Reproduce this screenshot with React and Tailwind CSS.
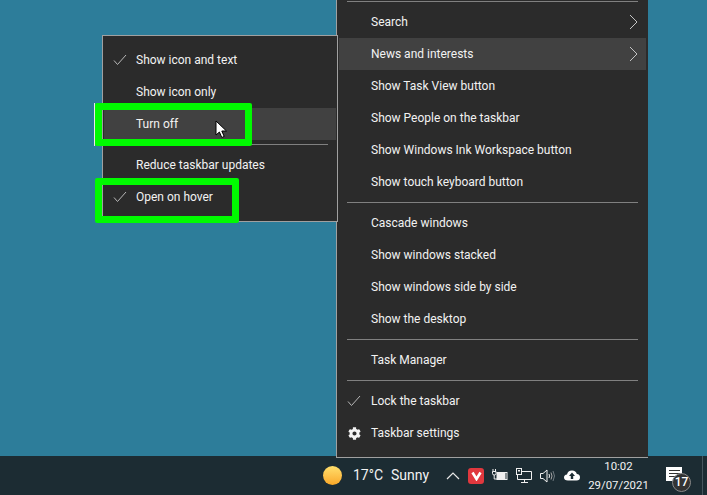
import { FaCog } from "react-icons/fa"

const font = "font-['Roboto','Noto_Sans',sans-serif]"

function Check() {
  return (
    <svg width="14" height="12" viewBox="0 0 14 12" fill="none" stroke="#b8b8b8" strokeWidth="1">
      <path d="M1 6.5 L4.5 10.5 L13 1" />
    </svg>
  )
}

function Row({ label, check, hover, arrow, gear, pad }) {
  return (
    <div className={`flex h-8 items-center text-[12px] text-[#f2f2f2] ${hover ? "bg-[#414141]" : ""}`}>
      <div className={`flex shrink-0 items-center justify-start ${pad}`}>
        {check && <Check />}
        {gear && <FaCog className="ml-[1px] text-[13px] text-[#f2f2f2]" />}
      </div>
      <span className="flex-1 whitespace-nowrap">{label}</span>
      {arrow && (
        <svg className="mr-[8px]" width="9" height="16" viewBox="0 0 9 16" fill="none" stroke="#c4c4c4" strokeWidth="1">
          <path d="M1 1 L8 8 L1 15" />
        </svg>
      )}
    </div>
  )
}

function Sep({ className }) {
  return <div className={`my-1 h-px bg-[#808080] ${className}`} />
}

function MainMenu() {
  const p = "w-[32px] pl-[8px]"
  return (
    <div className="absolute left-[336px] top-0 h-[458px] w-[312px] border-b border-l border-[#a0a0a0] bg-[#2b2b2b] px-[2px]">
      <div className="mx-[8px] mt-px h-px bg-[#808080]" />
      <div className="h-1" />
      <Row label="Search" arrow pad={p} />
      <Row label="News and interests" arrow hover pad={p} />
      <Row label="Show Task View button" pad={p} />
      <Row label="Show People on the taskbar" pad={p} />
      <Row label="Show Windows Ink Workspace button" pad={p} />
      <Row label="Show touch keyboard button" pad={p} />
      <Sep className="mx-[8px]" />
      <Row label="Cascade windows" pad={p} />
      <Row label="Show windows stacked" pad={p} />
      <Row label="Show windows side by side" pad={p} />
      <Row label="Show the desktop" pad={p} />
      <Sep className="mx-[8px]" />
      <Row label="Task Manager" pad={p} />
      <Sep className="mx-[8px]" />
      <Row label="Lock the taskbar" check pad={p} />
      <Row label="Taskbar settings" gear pad={p} />
    </div>
  )
}

function SubMenu() {
  const p = "w-[32px] pl-[9px]"
  return (
    <div className="absolute left-[102px] top-[35px] h-[187px] w-[236px] border border-[#a0a0a0] bg-[#2b2b2b] px-[1px] pt-[8px]">
      <Row label="Show icon and text" check pad={p} />
      <Row label="Show icon only" pad={p} />
      <Row label="Turn off" hover pad={p} />
      <Sep className="mx-[8px]" />
      <Row label="Reduce taskbar updates" pad={p} />
      <Row label="Open on hover" check pad={p} />
    </div>
  )
}

function Tray() {
  return (
    <div className="flex items-center gap-[8px]">
      <svg width="14" height="9" viewBox="0 0 14 9" fill="none" stroke="#e8e8e8" strokeWidth="1.2">
        <path d="M1 8 L7 2 L13 8" />
      </svg>
      <div className="flex h-[16px] w-[16px] items-center justify-center rounded-[3px] bg-[#e0383e]">
        <svg width="11" height="10" viewBox="0 0 11 10" fill="none" stroke="#fff" strokeWidth="2.6">
          <path d="M1.5 1.5 L5.5 8 L9.5 1.5" />
        </svg>
      </div>
      <svg width="16" height="16" viewBox="0 0 16 16" fill="none" stroke="#f0f0f0">
        <path d="M1 3.5 V1 M3.5 3.5 V1 M0.5 3.5 H4 V5.5 Q4 7 2.2 7 Q0.5 7 0.5 5.5 Z M2.2 7 V11 H5" strokeWidth="1" />
        <rect x="5" y="4.5" width="10" height="7" strokeWidth="1" />
        <rect x="5" y="4.5" width="8.5" height="7" fill="#f0f0f0" stroke="none" />
      </svg>
      <svg width="16" height="16" viewBox="0 0 16 16" fill="none" stroke="#f0f0f0" strokeWidth="1">
        <path d="M5.5 3.5 H15.5 V11.5 H1.5 V7" />
        <rect x="0.5" y="0.5" width="5" height="6" />
        <rect x="2" y="2" width="2" height="1.5" fill="#f0f0f0" stroke="none" />
        <path d="M8.5 11.5 V14.5 M5 14.5 H12" />
      </svg>
      <svg width="16" height="16" viewBox="0 0 16 16" fill="none" stroke="#f0f0f0" strokeWidth="1">
        <path d="M0.5 5.5 H3 L7 2 V14 L3 10.5 H0.5 Z" />
        <path d="M9 6 Q10 8 9 10" />
        <path d="M11 4.5 Q13 8 11 11.5" stroke="#a8a8a8" />
        <path d="M13 3 Q16 8 13 13" stroke="#6f7a80" />
      </svg>
      <svg width="16" height="11" viewBox="0 0 16 11">
        <path d="M4 10.5 Q0 10.5 0 7.5 Q0 4.8 3 4.5 Q3.8 0.5 8 0.5 Q12 0.5 12.8 4 Q16 4.3 16 7.3 Q16 10.5 12.5 10.5 Z" fill="#fff" />
        <path d="M8 2.5 L11 6 H9.2 V9 H6.8 V6 H5 Z" fill="#1d2d34" />
      </svg>
    </div>
  )
}

function Taskbar() {
  return (
    <div className="absolute bottom-0 left-0 flex h-[39px] w-[707px] items-center bg-[#1c2c33] pl-[323px] text-[#f2f2f2]">
      <div className="h-[19px] w-[19px] rounded-full bg-gradient-to-b from-[#ffdf6b] to-[#f9a825]" />
      <span className="ml-[11px] w-[38px] text-[14px]">17°C</span>
      <span className="w-[55px] text-[14px]">Sunny</span>
      <Tray />
      <div className="ml-[10px] flex w-[57px] flex-col items-center whitespace-nowrap text-[11.4px] leading-[19px]">
        <span>10:02</span>
        <span>29/07/2021</span>
      </div>
      <div className="relative ml-[19px] h-[18px] w-[16px]">
        <div className="flex h-[14px] w-[16px] flex-col gap-[2px] bg-white p-[3px] pr-[2px]">
          <div className="h-px bg-[#333]" />
          <div className="h-px bg-[#333]" />
          <div className="h-px bg-[#333]" />
        </div>
        <div className="absolute left-[6px] top-[6px] flex h-[19px] w-[19px] items-center justify-center rounded-full border border-[#8a8a8a] bg-[#333] text-[12px] font-medium text-white">
          17
        </div>
      </div>
      <div className="absolute left-[702px] top-0 h-full w-px bg-[#47565e]" />
    </div>
  )
}

function Highlights() {
  return (
    <>
      <div className="absolute left-[95px] top-[103px] h-[43px] w-[157px] rounded-[2px] border-[7px] border-[#00fa00]" />
      <div className="absolute left-[94px] top-[103px] h-[43px] w-px bg-[#e8e8e8]" />
      <div className="absolute left-[95px] top-[178px] h-[45px] w-[144px] rounded-[2px] border-[7px] border-[#00fa00]" />
      <div className="absolute left-[102px] top-[185px] h-[31px] w-px bg-[#a0a0a0]" />
    </>
  )
}

function Cursor() {
  return (
    <svg className="absolute left-[215px] top-[120px]" width="13" height="19" viewBox="0 0 13 19">
      <path d="M1 1 V15 L4.4 12 L6.8 17.5 L9.2 16.4 L6.8 11 H11.5 Z" fill="#fff" stroke="#000" strokeWidth="1" />
    </svg>
  )
}

export default function App() {
  return (
    <div className={`relative h-[495px] w-[707px] overflow-hidden bg-[#2d7d9a] ${font}`}>
      <Taskbar />
      <MainMenu />
      <SubMenu />
      <Highlights />
      <Cursor />
    </div>
  )
}
